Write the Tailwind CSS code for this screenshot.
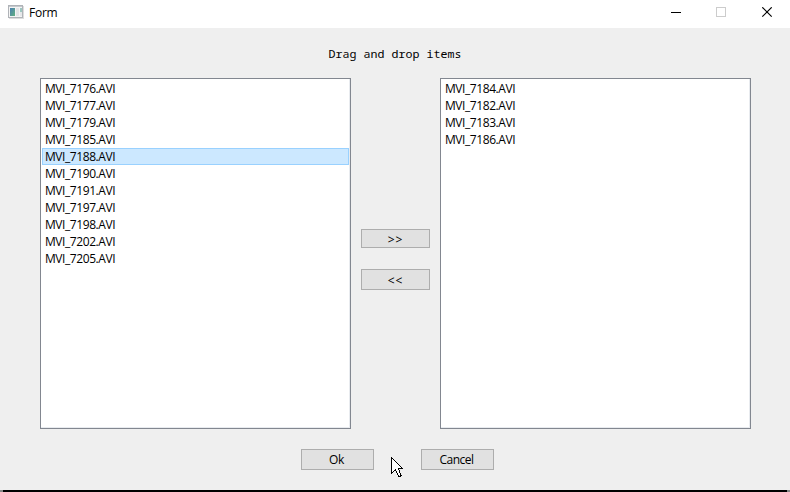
<!DOCTYPE html>
<html lang="en">
<head>
<meta charset="utf-8">
<title>Form</title>
<script src="https://cdn.jsdelivr.net/npm/@tailwindcss/browser@4"></script>
</head>
<body class="w-[790px] h-[492px] overflow-hidden bg-[#efefef] flex flex-col text-black text-[12px] font-['Segoe_UI','Open_Sans',sans-serif] relative">
<header class="h-7 shrink-0 bg-white flex items-start">
  <svg class="ml-2 mt-[5px] shrink-0" width="16" height="14" viewBox="0 0 16 14" shape-rendering="crispEdges">
    <defs><linearGradient id="g" x1="0" y1="0" x2="1" y2="1"><stop offset="0" stop-color="#4a7fb0"/><stop offset="1" stop-color="#62b080"/></linearGradient></defs>
    <rect x="0.5" y="0.5" width="14" height="12" fill="#f4f4f4" stroke="#b0b3b8"/>
    <path d="M1 1.5h13" stroke="#c5c9cd"/>
    <rect x="2" y="3" width="5" height="8" fill="url(#g)"/>
    <rect x="8" y="3" width="3" height="8" fill="#e2e4e6"/>
    <rect x="12" y="3" width="2" height="4" fill="#9cc6c0"/>
    <rect x="12" y="7" width="2" height="4" fill="#e6e8ea"/>
    <path d="M1 13.5h15M15.5 1v12" stroke="#dddddd"/>
  </svg>
  <span class="ml-[5px] mt-[4px] leading-[17px] tracking-[-0.25px]">Form</span>
  <svg class="ml-auto mr-[16px] mt-[7px]" width="103" height="11" viewBox="0 0 103 11">
    <path d="M0 5.5h10" stroke="#000"/>
    <rect x="45.5" y="0.5" width="9" height="9" fill="none" stroke="#ccc"/>
    <path d="M91.3 .3l9.4 9.4M100.7 .3l-9.4 9.4" stroke="#000" stroke-width="1.15"/>
  </svg>
</header>
<h1 class="mt-[17px] h-[18px] leading-[18px] shrink-0 text-center font-['Consolas','Noto_Sans_Mono','DejaVu_Sans_Mono',monospace] text-[11.6px] tracking-[0.05px]">Drag and drop items</h1>
<main class="mt-[15px] ml-10 mr-[39px] flex shrink-0 h-[351px]">
  <ul class="w-[311px] shrink-0 border border-[#828790] bg-white p-px leading-[17px] tracking-[-0.43px] shadow-[inset_-1px_-1px_#e8ebef]">
    <li class="h-[17px] px-[3px]">MVI_7176.AVI</li>
    <li class="h-[17px] px-[3px]">MVI_7177.AVI</li>
    <li class="h-[17px] px-[3px]">MVI_7179.AVI</li>
    <li class="h-[17px] px-[3px]">MVI_7185.AVI</li>
    <li class="h-[17px] px-[2px] leading-[15px] border border-[#99d1ff] bg-[#cce8ff]">MVI_7188.AVI</li>
    <li class="h-[17px] px-[3px]">MVI_7190.AVI</li>
    <li class="h-[17px] px-[3px]">MVI_7191.AVI</li>
    <li class="h-[17px] px-[3px]">MVI_7197.AVI</li>
    <li class="h-[17px] px-[3px]">MVI_7198.AVI</li>
    <li class="h-[17px] px-[3px]">MVI_7202.AVI</li>
    <li class="h-[17px] px-[3px]">MVI_7205.AVI</li>
  </ul>
  <div class="mx-[10px] w-[69px] shrink-0 pt-[151px] flex flex-col">
    <button class="h-[19px] border border-[#adadad] bg-[#e1e1e1] flex items-center justify-center">
      <span class="relative top-px leading-[17px] tracking-[1px] text-[12px]">&gt;&gt;</span>
    </button>
    <button class="mt-[21px] h-[21px] border border-[#adadad] bg-[#e1e1e1] flex items-center justify-center">
      <span class="relative top-px leading-[19px] tracking-[1px] text-[12px]">&lt;&lt;</span>
    </button>
  </div>
  <ul class="w-[311px] shrink-0 border border-[#828790] bg-white p-px leading-[17px] tracking-[-0.43px] shadow-[inset_-1px_-1px_#e8ebef]">
    <li class="h-[17px] px-[3px]">MVI_7184.AVI</li>
    <li class="h-[17px] px-[3px]">MVI_7182.AVI</li>
    <li class="h-[17px] px-[3px]">MVI_7183.AVI</li>
    <li class="h-[17px] px-[3px]">MVI_7186.AVI</li>
  </ul>
</main>
<div class="mt-5 ml-[301px] flex gap-[47px] shrink-0">
  <button class="w-[73px] h-[21px] pr-[2px] border border-[#adadad] bg-[#e1e1e1] leading-[19px] tracking-[-0.4px]">Ok</button>
  <button class="w-[73px] h-[21px] pr-[2px] border border-[#adadad] bg-[#e1e1e1] leading-[19px] tracking-[-0.5px]">Cancel</button>
</div>
<footer class="mt-auto h-[2px] shrink-0 bg-black border-l-[3px] border-r-[3px] border-l-[#888] border-r-[#888]"></footer>
<svg class="absolute left-[391px] top-[457px]" width="12" height="21" viewBox="0 0 12 21" shape-rendering="crispEdges">
  <path d="M.5 .5V16.5L4.5 12.5L7.5 19.5L9.5 19.5L10 18.5L7.5 11.5H11.5Z" fill="#fff" stroke="#000"/>
</svg>
</body>
</html>
